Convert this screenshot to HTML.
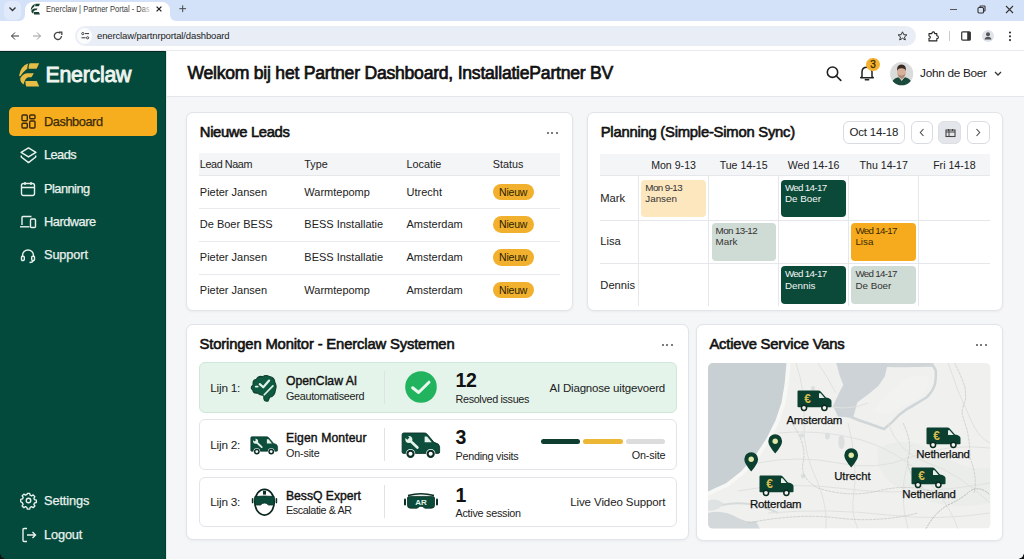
<!DOCTYPE html>
<html><head><meta charset="utf-8"><title>Enerclaw</title><style>*{box-sizing:border-box;margin:0;padding:0}
html,body{width:1024px;height:559px;overflow:hidden;background:#fff;font-family:"Liberation Sans",sans-serif;color:#111;position:relative}
.abs{position:absolute}
.t{position:absolute;white-space:nowrap;line-height:1}
svg.abs{overflow:visible}</style></head><body>
<div class="abs" style="left:0.00px;top:0.00px;width:1024.00px;height:51.00px;background:#fff"></div>
<div class="abs" style="left:0.00px;top:0.00px;width:1024.00px;height:10.00px;background:#d4e2f9"></div>
<div class="abs" style="left:0.00px;top:0.00px;width:24.50px;height:20.80px;background:#d4e2f9;border-bottom-right-radius:6px"></div>
<div class="abs" style="left:170.00px;top:0.00px;width:854.00px;height:20.80px;background:#d4e2f9;border-bottom-left-radius:6px"></div>
<div class="abs" style="left:3.50px;top:1.00px;width:17.50px;height:18.50px;background:#e1eafa;border-radius:6px"></div>
<svg class="abs" style="left:8.00px;top:6.00px;" width="9" height="6" viewBox="0 0 9 6"><path d="M1.5 1.5 L4.5 4.5 L7.5 1.5" stroke="#333" stroke-width="1.3" fill="none"/></svg>
<div class="abs" style="left:24.50px;top:1.50px;width:145.50px;height:20.50px;background:#fff;border-radius:8px 8px 0 0"></div>
<svg class="abs" style="left:29.50px;top:3.20px;" width="12" height="13.6" viewBox="0 0 30 34"><g transform="translate(-4 -4) scale(1.15)" fill="#163f31">
<path d="M15.6 5.2 H25.2 L22.6 10.8 H14.6 Q14.4 7.8 15.6 5.2 Z"/>
<path d="M14.2 5.4 Q6.8 7.6 5.1 17.6 Q5.4 18.8 6.4 18.1 Q9.6 13.2 13.2 10.7 Q13.3 7.9 14.2 5.4 Z"/>
<path d="M6.2 20.6 Q8.8 15.6 13 15.3 H19.9 L17.4 19.2 H14.2 Q11.2 19.8 9.6 26.4 Q6.2 24.6 6.2 20.6 Z"/>
<path d="M11.4 23.1 H22.8 L25.2 28.6 H12.3 Q11.2 26.2 11.4 23.1 Z"/>
</g></svg>
<div class="t" style="left:45.50px;top:5.02px;font-size:8.6px;font-weight:normal;color:#3a3a3a;transform:scaleX(0.8766);transform-origin:left center;">Enerclaw | Partner Portal - Das</div>
<div class="abs" style="left:140.00px;top:3.00px;width:13.00px;height:17.00px;background:linear-gradient(90deg,rgba(255,255,255,0),#fff)"></div>
<svg class="abs" style="left:156.40px;top:5.80px;" width="6" height="6" viewBox="0 0 6 6"><path d="M0.6 0.6L5.4 5.4M5.4 0.6L0.6 5.4" stroke="#222" stroke-width="1.3"/></svg>
<svg class="abs" style="left:178.80px;top:5.20px;" width="7.4" height="7.4" viewBox="0 0 7.4 7.4"><path d="M3.7 0.3V7.1M0.3 3.7H7.1" stroke="#444" stroke-width="1"/></svg>
<div class="abs" style="left:950.00px;top:8.50px;width:7.00px;height:1.10px;background:#555"></div>
<svg class="abs" style="left:977.00px;top:5.00px;" width="9" height="9" viewBox="0 0 9 9"><rect x="1" y="2.5" width="5.5" height="5.5" rx="1" stroke="#333" stroke-width="1.1" fill="none"/><path d="M3 2.5V1.5Q3 1 3.5 1H7.5Q8 1 8 1.5V5.5Q8 6 7.5 6H6.5" stroke="#333" stroke-width="1.1" fill="none"/></svg>
<svg class="abs" style="left:1005.00px;top:5.00px;" width="9" height="9" viewBox="0 0 9 9"><path d="M1 1L8 8M8 1L1 8" stroke="#333" stroke-width="1.1"/></svg>
<div class="abs" style="left:0.00px;top:50.00px;width:1024.00px;height:1.00px;background:#e8eaed"></div>
<svg class="abs" style="left:9.50px;top:31.00px;" width="10" height="10" viewBox="0 0 10 10"><path d="M9 5H1.5M5 1.5L1.5 5L5 8.5" stroke="#333" stroke-width="1" fill="none"/></svg>
<svg class="abs" style="left:31.50px;top:31.00px;" width="10" height="10" viewBox="0 0 10 10"><path d="M1 5H8.5M5 1.5L8.5 5L5 8.5" stroke="#999" stroke-width="1" fill="none"/></svg>
<svg class="abs" style="left:53.00px;top:31.00px;" width="10" height="10" viewBox="0 0 10 10"><path d="M8.5 5A3.6 3.6 0 1 1 7.4 2.3" stroke="#444" stroke-width="1.3" fill="none"/><path d="M6 1.2H8.8V4" stroke="#444" stroke-width="1.3" fill="none"/></svg>
<div class="abs" style="left:74.50px;top:25.50px;width:841.50px;height:20.30px;background:#e9eef6;border-radius:11px"></div>
<div class="abs" style="left:77.00px;top:27.50px;width:15.00px;height:16.30px;background:#fbfcfe;border-radius:8px"></div>
<svg class="abs" style="left:80.50px;top:32.00px;" width="8.5" height="7.5" viewBox="0 0 8.5 7.5"><circle cx="1.8" cy="1.6" r="1.1" stroke="#333" stroke-width="0.9" fill="none"/><path d="M4 1.6H8" stroke="#333" stroke-width="1"/><circle cx="6.6" cy="5.8" r="1.1" stroke="#333" stroke-width="0.9" fill="none"/><path d="M0.5 5.8H4.6" stroke="#333" stroke-width="1"/></svg>
<div class="t" style="left:97.00px;top:30.96px;font-size:9.5px;font-weight:normal;color:#222;letter-spacing:-0.138px;">enerclaw/partnrportal/dashboard</div>
<svg class="abs" style="left:897.00px;top:31.00px;" width="11" height="10" viewBox="0 0 11 10"><path d="M5.5 0.8L6.8 3.7L9.9 3.9L7.5 5.9L8.3 9L5.5 7.3L2.7 9L3.5 5.9L1.1 3.9L4.2 3.7Z" stroke="#333" stroke-width="1" fill="none" stroke-linejoin="round"/></svg>
<svg class="abs" style="left:927.50px;top:30.50px;" width="11" height="11" viewBox="0 0 11 11"><path d="M1 2.6 H3.9 Q3.9 0.9 5.3 0.9 Q6.7 0.9 6.7 2.6 H8.8 V4.8 Q10.4 4.8 10.4 6.2 Q10.4 7.6 8.8 7.6 V9.9 H1 V7.4 Q2.4 7.4 2.4 6.2 Q2.4 5 1 5 Z" stroke="#222" stroke-width="1.1" fill="none" stroke-linejoin="round"/></svg>
<div class="abs" style="left:949.00px;top:31.00px;width:1.00px;height:10.00px;background:#ccc"></div>
<svg class="abs" style="left:961.00px;top:31.00px;" width="10" height="10" viewBox="0 0 10 10"><rect x="0.7" y="0.8" width="8.6" height="8.4" rx="1" stroke="#333" stroke-width="1.2" fill="none"/><rect x="6.2" y="1" width="3" height="8" fill="#333"/></svg>
<div class="abs" style="left:982.00px;top:30.00px;width:12.00px;height:12.00px;background:#dfe3ea;border-radius:50%"></div>
<svg class="abs" style="left:982.00px;top:30.00px;" width="12" height="12" viewBox="0 0 12 12"><circle cx="6" cy="4.3" r="2" fill="#555"/><path d="M2.5 9.5Q3 6.8 6 6.8Q9 6.8 9.5 9.5Z" fill="#555"/></svg>
<svg class="abs" style="left:1008.00px;top:31.00px;" width="4" height="11" viewBox="0 0 4 11"><circle cx="2" cy="1.5" r="1.1" fill="#333"/><circle cx="2" cy="5.3" r="1.1" fill="#333"/><circle cx="2" cy="9.1" r="1.1" fill="#333"/></svg>
<div class="abs" style="left:0.00px;top:51.00px;width:166.00px;height:508.00px;background:#034a3d"></div>
<div class="abs" style="left:0.00px;top:50.50px;width:166.00px;height:1.30px;background:#04261e"></div>
<div class="abs" style="left:164.80px;top:51.00px;width:1.20px;height:508.00px;background:#023d32"></div>
<div class="abs" style="left:166.00px;top:51.00px;width:1.00px;height:508.00px;background:#e3e6ea"></div>
<svg class="abs" style="left:14.00px;top:58.00px;" width="30" height="34" viewBox="0 0 30 34"><g fill="#e8bd45">
<path d="M15.6 5.2 H25.2 L22.6 10.8 H14.6 Q14.4 7.8 15.6 5.2 Z"/>
<path d="M14.2 5.4 Q6.8 7.6 5.1 17.6 Q5.4 18.8 6.4 18.1 Q9.6 13.2 13.2 10.7 Q13.3 7.9 14.2 5.4 Z"/>
<path d="M6.2 20.6 Q8.8 15.6 13 15.3 H19.9 L17.4 19.2 H14.2 Q11.2 19.8 9.6 26.4 Q6.2 24.6 6.2 20.6 Z"/>
<path d="M11.4 23.1 H22.8 L25.2 28.6 H12.3 Q11.2 26.2 11.4 23.1 Z"/>
</g></svg>
<div class="t" style="left:45.50px;top:64.87px;font-size:21.3px;font-weight:normal;color:#eef5ef;-webkit-text-stroke:0.9px #eef5ef;letter-spacing:-0.237px;">Enerclaw</div>
<div class="abs" style="left:9.00px;top:106.60px;width:148.00px;height:29.60px;background:#f6ae1f;border-radius:5px"></div>
<svg class="abs" style="left:20.50px;top:113.50px;" width="15" height="15" viewBox="0 0 15 15"><g fill="none" stroke="#3b2a0c" stroke-width="1.4"><rect x="1" y="1" width="5.3" height="5.8" rx="1"/><rect x="8.7" y="1" width="5.3" height="3.8" rx="1"/><rect x="1" y="9.2" width="5.3" height="4.8" rx="1"/><rect x="8.7" y="7" width="5.3" height="7" rx="1"/></g></svg>
<div class="t" style="left:44.00px;top:115.56px;font-size:12.8px;font-weight:normal;color:#3b2a0c;-webkit-text-stroke:0.25px;letter-spacing:-0.445px;">Dashboard</div>
<svg class="abs" style="left:19.80px;top:146.50px;" width="17" height="17" viewBox="0 0 17 17"><g fill="none" stroke="#e9f1ec" stroke-width="1.5" stroke-linejoin="round"><path d="M8.5 0.9L15.9 5.4L8.5 9.9L1.1 5.4Z"/><path d="M1.3 8.6V10L8.5 15.6L15.7 10V8.6"/></g></svg>
<div class="t" style="left:44.00px;top:149.36px;font-size:12.8px;font-weight:normal;color:#e9f1ec;-webkit-text-stroke:0.25px;letter-spacing:-0.575px;">Leads</div>
<svg class="abs" style="left:20.00px;top:180.50px;" width="16" height="16" viewBox="0 0 16 16"><g fill="none" stroke="#e9f1ec" stroke-width="1.4"><rect x="1.5" y="2.5" width="13" height="12" rx="2"/><path d="M1.5 6.5H14.5M5 1V4M11 1V4"/></g></svg>
<div class="t" style="left:44.00px;top:182.66px;font-size:12.8px;font-weight:normal;color:#e9f1ec;-webkit-text-stroke:0.25px;letter-spacing:-0.527px;">Planning</div>
<svg class="abs" style="left:19.00px;top:214.00px;" width="18" height="16" viewBox="0 0 18 16"><g fill="none" stroke="#e9f1ec" stroke-width="1.4"><path d="M3 11V3.5Q3 2.5 4 2.5H12.5"/><path d="M1 12.8H10.5"/><rect x="11.5" y="5" width="5" height="8.5" rx="1"/></g></svg>
<div class="t" style="left:44.00px;top:216.16px;font-size:12.8px;font-weight:normal;color:#e9f1ec;-webkit-text-stroke:0.25px;letter-spacing:-0.473px;">Hardware</div>
<svg class="abs" style="left:20.00px;top:248.00px;" width="16" height="16" viewBox="0 0 16 16"><g fill="none" stroke="#e9f1ec" stroke-width="1.4"><path d="M2.5 9V7.5A5.5 5.5 0 0 1 13.5 7.5V9"/><rect x="1.5" y="8.2" width="2.8" height="4.3" rx="1"/><rect x="11.7" y="8.2" width="2.8" height="4.3" rx="1"/><path d="M13 12.5Q13 14.5 9.5 14.5"/></g></svg>
<div class="t" style="left:44.00px;top:249.36px;font-size:12.8px;font-weight:normal;color:#e9f1ec;-webkit-text-stroke:0.25px;letter-spacing:-0.147px;">Support</div>
<svg class="abs" style="left:19.50px;top:492.00px;" width="17" height="17" viewBox="0 0 24 24"><g fill="none" stroke="#e9f1ec" stroke-width="1.9" stroke-linejoin="round"><path d="M10.3 2h3.4l.6 2.6 2 .9 2.3-1.4 2.4 2.4-1.4 2.3.9 2 2.6.6v3.4l-2.6.6-.9 2 1.4 2.3-2.4 2.4-2.3-1.4-2 .9-.6 2.6h-3.4l-.6-2.6-2-.9-2.3 1.4-2.4-2.4 1.4-2.3-.9-2L1 13.7v-3.4l2.6-.6.9-2-1.4-2.3 2.4-2.4 2.3 1.4 2-.9z"/><circle cx="12" cy="12" r="3.2"/></g></svg>
<div class="t" style="left:44.00px;top:495.36px;font-size:12.8px;font-weight:normal;color:#e9f1ec;-webkit-text-stroke:0.25px;letter-spacing:-0.131px;">Settings</div>
<svg class="abs" style="left:20.50px;top:526.50px;" width="16" height="16" viewBox="0 0 16 16"><g fill="none" stroke="#e9f1ec" stroke-width="1.4"><path d="M6 1.5H3Q2 1.5 2 2.5V13.5Q2 14.5 3 14.5H6"/><path d="M6 8H14.5M11.5 5L14.5 8L11.5 11"/></g></svg>
<div class="t" style="left:44.00px;top:528.86px;font-size:12.8px;font-weight:normal;color:#e9f1ec;-webkit-text-stroke:0.25px;letter-spacing:-0.157px;">Logout</div>
<div class="abs" style="left:167.00px;top:51.00px;width:857.00px;height:508.00px;background:#f4f6f7"></div>
<div class="abs" style="left:167.00px;top:51.00px;width:857.00px;height:46.00px;background:#fff;border-bottom:1px solid #e3e6ea"></div>
<div class="t" style="left:187.40px;top:65.10px;font-size:17.6px;font-weight:normal;color:#111;-webkit-text-stroke:0.7px #111;letter-spacing:-0.239px;">Welkom bij het Partner Dashboard, InstallatiePartner BV</div>
<svg class="abs" style="left:826.00px;top:66.00px;" width="16" height="15" viewBox="0 0 16 15"><circle cx="6.5" cy="6.2" r="5.2" stroke="#222" stroke-width="1.6" fill="none"/><path d="M10.3 10L14.8 14.3" stroke="#222" stroke-width="1.7" stroke-linecap="round"/></svg>
<svg class="abs" style="left:859.00px;top:65.00px;" width="16" height="16" viewBox="0 0 16 16"><path d="M3 11.5V7Q3 2.3 8 2.3Q13 2.3 13 7V11.5L14.3 12.7H1.7Z" stroke="#222" stroke-width="1.5" fill="none" stroke-linejoin="round"/><path d="M6.3 14.7H9.7" stroke="#222" stroke-width="1.5" stroke-linecap="round"/></svg>
<div class="abs" style="left:866.40px;top:57.90px;width:13.40px;height:13.40px;background:#f2b12e;border-radius:50%"></div>
<div class="t" style="left:723.10px;width:300px;top:59.93px;font-size:10px;font-weight:normal;color:#3a2800;text-align:center;-webkit-text-stroke:0.3px #3a2800;">3</div>
<svg class="abs" style="left:890.2px;top:61.6px" width="23.4" height="23.4" viewBox="0 0 24 24">
<defs><clipPath id="av"><circle cx="12" cy="12" r="11.9"/></clipPath></defs>
<g clip-path="url(#av)"><rect width="24" height="24" fill="#dadbdb"/>
<path d="M0.5 26 Q1.5 17 8.5 15.6 L12 18.5 L15.5 15.6 Q22.5 17 23.5 26Z" fill="#1b4a3c"/>
<path d="M9.5 15.8 L12 19.5 L14.5 15.8Z" fill="#e6e6e6"/>
<path d="M9.8 13.5 H14.2 V16.2 L12 18.3 L9.8 16.2Z" fill="#c59b84"/>
<ellipse cx="11.8" cy="10.6" rx="4.4" ry="5.6" fill="#d6b09a"/>
<path d="M7.6 11.5 Q8 15.8 11.8 16.2 Q15.6 15.8 16 11.5 Q15 13.8 11.8 14 Q8.6 13.8 7.6 11.5Z" fill="#8a6a58" opacity="0.6"/>
<path d="M7.2 9.5 Q6.6 2.6 11.8 2.5 Q17 2.6 16.4 9.5 Q15.6 6.2 11.8 6.3 Q8 6.2 7.2 9.5Z" fill="#3a2a22"/>
</g></svg>
<div class="t" style="left:920.10px;top:67.61px;font-size:11.8px;font-weight:normal;color:#1a1a1a;letter-spacing:-0.307px;">John de Boer</div>
<svg class="abs" style="left:993.50px;top:71.00px;" width="8" height="5" viewBox="0 0 8 5"><path d="M1 1L4 4L7 1" stroke="#333" stroke-width="1.3" fill="none"/></svg>
<div class="abs" style="left:186.00px;top:111.50px;width:387.00px;height:199.50px;background:#fff;border:1px solid #e1e4e8;border-radius:7px;box-shadow:0 1px 3px rgba(0,0,0,0.05)"></div>
<div class="t" style="left:199.80px;top:124.57px;font-size:14.8px;font-weight:normal;color:#111;-webkit-text-stroke:0.6px #111;letter-spacing:-0.340px;">Nieuwe Leads</div>
<div class="abs" style="left:547.00px;top:131.60px;width:2.10px;height:2.10px;background:#505050;border-radius:50%"></div>
<div class="abs" style="left:551.40px;top:131.60px;width:2.10px;height:2.10px;background:#505050;border-radius:50%"></div>
<div class="abs" style="left:555.80px;top:131.60px;width:2.10px;height:2.10px;background:#505050;border-radius:50%"></div>
<div class="abs" style="left:199.00px;top:153.00px;width:361.00px;height:22.50px;background:#f4f5f7;border-bottom:1px solid #e5e7ea"></div>
<div class="t" style="left:199.80px;top:158.86px;font-size:10.8px;font-weight:normal;color:#222;letter-spacing:-0.392px;">Lead Naam</div>
<div class="t" style="left:304.30px;top:158.86px;font-size:10.8px;font-weight:normal;color:#222;">Type</div>
<div class="t" style="left:406.50px;top:158.86px;font-size:10.8px;font-weight:normal;color:#222;">Locatie</div>
<div class="t" style="left:492.80px;top:158.86px;font-size:10.8px;font-weight:normal;color:#222;">Status</div>
<div class="t" style="left:199.80px;top:186.59px;font-size:11px;font-weight:normal;color:#222;">Pieter Jansen</div>
<div class="t" style="left:304.30px;top:186.59px;font-size:11px;font-weight:normal;color:#222;">Warmtepomp</div>
<div class="t" style="left:406.50px;top:186.59px;font-size:11px;font-weight:normal;color:#222;">Utrecht</div>
<div class="abs" style="left:492.60px;top:183.60px;width:41.00px;height:16.90px;background:#f1b02d;border-radius:9px"></div>
<div class="t" style="left:363.10px;width:300px;top:186.61px;font-size:10.5px;font-weight:normal;color:#2b2100;text-align:center;letter-spacing:-0.217px;">Nieuw</div>
<div class="abs" style="left:199.00px;top:208.20px;width:361.00px;height:1.00px;background:#e7e9ec"></div>
<div class="t" style="left:199.80px;top:219.24px;font-size:11px;font-weight:normal;color:#222;">De Boer BESS</div>
<div class="t" style="left:304.30px;top:219.24px;font-size:11px;font-weight:normal;color:#222;">BESS Installatie</div>
<div class="t" style="left:406.50px;top:219.24px;font-size:11px;font-weight:normal;color:#222;">Amsterdam</div>
<div class="abs" style="left:492.60px;top:216.25px;width:41.00px;height:16.90px;background:#f1b02d;border-radius:9px"></div>
<div class="t" style="left:363.10px;width:300px;top:219.26px;font-size:10.5px;font-weight:normal;color:#2b2100;text-align:center;letter-spacing:-0.217px;">Nieuw</div>
<div class="abs" style="left:199.00px;top:240.85px;width:361.00px;height:1.00px;background:#e7e9ec"></div>
<div class="t" style="left:199.80px;top:251.89px;font-size:11px;font-weight:normal;color:#222;">Pieter Jansen</div>
<div class="t" style="left:304.30px;top:251.89px;font-size:11px;font-weight:normal;color:#222;">BESS Installatie</div>
<div class="t" style="left:406.50px;top:251.89px;font-size:11px;font-weight:normal;color:#222;">Amsterdam</div>
<div class="abs" style="left:492.60px;top:248.90px;width:41.00px;height:16.90px;background:#f1b02d;border-radius:9px"></div>
<div class="t" style="left:363.10px;width:300px;top:251.91px;font-size:10.5px;font-weight:normal;color:#2b2100;text-align:center;letter-spacing:-0.217px;">Nieuw</div>
<div class="abs" style="left:199.00px;top:273.50px;width:361.00px;height:1.00px;background:#e7e9ec"></div>
<div class="t" style="left:199.80px;top:284.54px;font-size:11px;font-weight:normal;color:#222;">Pieter Jansen</div>
<div class="t" style="left:304.30px;top:284.54px;font-size:11px;font-weight:normal;color:#222;">Warmtepomp</div>
<div class="t" style="left:406.50px;top:284.54px;font-size:11px;font-weight:normal;color:#222;">Amsterdam</div>
<div class="abs" style="left:492.60px;top:281.55px;width:41.00px;height:16.90px;background:#f1b02d;border-radius:9px"></div>
<div class="t" style="left:363.10px;width:300px;top:284.56px;font-size:10.5px;font-weight:normal;color:#2b2100;text-align:center;letter-spacing:-0.217px;">Nieuw</div>
<div class="abs" style="left:587.00px;top:111.50px;width:415.80px;height:199.00px;background:#fff;border:1px solid #e1e4e8;border-radius:7px;box-shadow:0 1px 3px rgba(0,0,0,0.05)"></div>
<div class="t" style="left:600.70px;top:125.07px;font-size:14.8px;font-weight:normal;color:#111;-webkit-text-stroke:0.6px #111;letter-spacing:-0.228px;">Planning (Simple-Simon Sync)</div>
<div class="abs" style="left:843.00px;top:121.20px;width:61.60px;height:22.70px;background:#fff;border:1px solid #d8dbe0;border-radius:6px"></div>
<div class="t" style="left:723.80px;width:300px;top:126.76px;font-size:11.5px;font-weight:normal;color:#222;text-align:center;letter-spacing:-0.189px;">Oct 14-18</div>
<div class="abs" style="left:910.70px;top:121.20px;width:22.00px;height:22.70px;background:#fff;border:1px solid #d8dbe0;border-radius:6px"></div>
<svg class="abs" style="left:917.80px;top:128.00px;" width="8" height="9" viewBox="0 0 8 9"><path d="M5.5 1L2.3 4.5L5.5 8" stroke="#444" stroke-width="1.05" fill="none"/></svg>
<div class="abs" style="left:938.20px;top:121.20px;width:23.10px;height:22.70px;background:#e3e6ea;border:1px solid #dcdfe3;border-radius:6px"></div>
<svg class="abs" style="left:944.50px;top:127.50px;" width="11" height="10" viewBox="0 0 11 10"><rect x="1" y="2" width="9" height="6.5" stroke="#444" stroke-width="1.1" fill="none"/><path d="M1 4H10M4 2V8.5M3.5 1V3M7.5 1V3" stroke="#444" stroke-width="1"/></svg>
<div class="abs" style="left:966.80px;top:121.20px;width:23.00px;height:22.70px;background:#fff;border:1px solid #d8dbe0;border-radius:6px"></div>
<svg class="abs" style="left:974.00px;top:128.00px;" width="8" height="9" viewBox="0 0 8 9"><path d="M2.5 1L5.7 4.5L2.5 8" stroke="#444" stroke-width="1.05" fill="none"/></svg>
<div class="abs" style="left:600.00px;top:153.50px;width:390.00px;height:22.90px;background:#f4f5f7;border-bottom:1px solid #e5e7ea"></div>
<div class="t" style="left:523.55px;width:300px;top:159.82px;font-size:10.6px;font-weight:normal;color:#222;text-align:center;">Mon 9-13</div>
<div class="t" style="left:593.60px;width:300px;top:159.82px;font-size:10.6px;font-weight:normal;color:#222;text-align:center;">Tue 14-15</div>
<div class="t" style="left:663.65px;width:300px;top:159.82px;font-size:10.6px;font-weight:normal;color:#222;text-align:center;">Wed 14-16</div>
<div class="t" style="left:733.75px;width:300px;top:159.82px;font-size:10.6px;font-weight:normal;color:#222;text-align:center;">Thu 14-17</div>
<div class="t" style="left:804.35px;width:300px;top:159.82px;font-size:10.6px;font-weight:normal;color:#222;text-align:center;">Fri 14-18</div>
<div class="abs" style="left:638.10px;top:176.40px;width:1.00px;height:130.10px;background:#e5e7ea"></div>
<div class="abs" style="left:708.00px;top:176.40px;width:1.00px;height:130.10px;background:#e5e7ea"></div>
<div class="abs" style="left:778.20px;top:176.40px;width:1.00px;height:130.10px;background:#e5e7ea"></div>
<div class="abs" style="left:848.10px;top:176.40px;width:1.00px;height:130.10px;background:#e5e7ea"></div>
<div class="abs" style="left:918.40px;top:176.40px;width:1.00px;height:130.10px;background:#e5e7ea"></div>
<div class="abs" style="left:600.00px;top:219.60px;width:390.00px;height:1.00px;background:#e5e7ea"></div>
<div class="abs" style="left:600.00px;top:263.00px;width:390.00px;height:1.00px;background:#e5e7ea"></div>
<div class="t" style="left:600.30px;top:192.72px;font-size:11.2px;font-weight:normal;color:#222;">Mark</div>
<div class="t" style="left:600.30px;top:236.22px;font-size:11.2px;font-weight:normal;color:#222;">Lisa</div>
<div class="t" style="left:600.30px;top:279.52px;font-size:11.2px;font-weight:normal;color:#222;">Dennis</div>
<div class="abs" style="left:641.30px;top:179.70px;width:64.60px;height:36.90px;background:#fce7bf;border-radius:4px"></div>
<div class="t" style="left:645.30px;top:182.80px;font-size:9.8px;font-weight:normal;color:#333;letter-spacing:-0.574px;">Mon 9-13</div>
<div class="t" style="left:645.30px;top:194.00px;font-size:9.8px;font-weight:normal;color:#333;">Jansen</div>
<div class="abs" style="left:781.00px;top:179.70px;width:65.00px;height:37.10px;background:#0b4a39;border-radius:4px"></div>
<div class="t" style="left:785.00px;top:182.80px;font-size:9.8px;font-weight:normal;color:#f2f5f3;letter-spacing:-0.706px;">Wed 14-17</div>
<div class="t" style="left:785.00px;top:194.00px;font-size:9.8px;font-weight:normal;color:#f2f5f3;">De Boer</div>
<div class="abs" style="left:711.60px;top:223.00px;width:64.10px;height:37.70px;background:#cfdbd5;border-radius:4px"></div>
<div class="t" style="left:715.60px;top:226.10px;font-size:9.8px;font-weight:normal;color:#333;letter-spacing:-0.605px;">Mon 13-12</div>
<div class="t" style="left:715.60px;top:237.30px;font-size:9.8px;font-weight:normal;color:#333;">Mark</div>
<div class="abs" style="left:851.40px;top:223.00px;width:64.90px;height:37.70px;background:#f6ab1f;border-radius:4px"></div>
<div class="t" style="left:855.40px;top:226.10px;font-size:9.8px;font-weight:normal;color:#3a2a00;letter-spacing:-0.706px;">Wed 14-17</div>
<div class="t" style="left:855.40px;top:237.30px;font-size:9.8px;font-weight:normal;color:#3a2a00;">Lisa</div>
<div class="abs" style="left:781.00px;top:266.30px;width:65.00px;height:37.70px;background:#0b4a39;border-radius:4px"></div>
<div class="t" style="left:785.00px;top:269.40px;font-size:9.8px;font-weight:normal;color:#f2f5f3;letter-spacing:-0.706px;">Wed 14-17</div>
<div class="t" style="left:785.00px;top:280.60px;font-size:9.8px;font-weight:normal;color:#f2f5f3;">Dennis</div>
<div class="abs" style="left:851.40px;top:266.30px;width:64.90px;height:37.70px;background:#cfdbd5;border-radius:4px"></div>
<div class="t" style="left:855.40px;top:269.40px;font-size:9.8px;font-weight:normal;color:#333;letter-spacing:-0.706px;">Wed 14-17</div>
<div class="t" style="left:855.40px;top:280.60px;font-size:9.8px;font-weight:normal;color:#333;">De Boer</div>
<div class="abs" style="left:186.00px;top:324.30px;width:503.00px;height:216.00px;background:#fff;border:1px solid #e1e4e8;border-radius:7px;box-shadow:0 1px 3px rgba(0,0,0,0.05)"></div>
<div class="t" style="left:199.50px;top:337.27px;font-size:14.8px;font-weight:normal;color:#111;-webkit-text-stroke:0.6px #111;letter-spacing:-0.154px;">Storingen Monitor - Enerclaw Systemen</div>
<div class="abs" style="left:662.00px;top:344.00px;width:2.10px;height:2.10px;background:#505050;border-radius:50%"></div>
<div class="abs" style="left:666.40px;top:344.00px;width:2.10px;height:2.10px;background:#505050;border-radius:50%"></div>
<div class="abs" style="left:670.80px;top:344.00px;width:2.10px;height:2.10px;background:#505050;border-radius:50%"></div>
<div class="abs" style="left:199.00px;top:362.40px;width:478.00px;height:50.80px;background:#e4f4ea;border:1px solid #cfe7d8;border-radius:6px"></div>
<div class="abs" style="left:199.00px;top:419.40px;width:478.00px;height:50.60px;background:#fff;border:1px solid #e1e4e8;border-radius:6px"></div>
<div class="abs" style="left:199.00px;top:476.50px;width:478.00px;height:50.70px;background:#fff;border:1px solid #e1e4e8;border-radius:6px"></div>
<div class="t" style="left:210.30px;top:382.61px;font-size:11.8px;font-weight:normal;color:#222;letter-spacing:-0.241px;">Lijn 1:</div>
<div class="t" style="left:286.00px;top:375.47px;font-size:12.2px;font-weight:normal;color:#111;-webkit-text-stroke:0.4px #111;letter-spacing:0.005px;">OpenClaw AI</div>
<div class="t" style="left:286.00px;top:391.06px;font-size:10.8px;font-weight:normal;color:#222;letter-spacing:-0.315px;">Geautomatiseerd</div>
<div class="abs" style="left:384.00px;top:371.00px;width:1.00px;height:33.40px;background:#dfe3e6"></div>
<div class="t" style="left:455.50px;top:371.49px;font-size:19.5px;font-weight:bold;color:#111;letter-spacing:-0.302px;">12</div>
<div class="t" style="left:455.50px;top:394.16px;font-size:10.8px;font-weight:normal;color:#222;letter-spacing:-0.335px;">Resolved issues</div>
<div class="t" style="left:210.30px;top:439.61px;font-size:11.8px;font-weight:normal;color:#222;letter-spacing:-0.241px;">Lijn 2:</div>
<div class="t" style="left:286.00px;top:432.47px;font-size:12.2px;font-weight:normal;color:#111;-webkit-text-stroke:0.4px #111;letter-spacing:0.101px;">Eigen Monteur</div>
<div class="t" style="left:286.00px;top:448.06px;font-size:10.8px;font-weight:normal;color:#222;letter-spacing:-0.188px;">On-site</div>
<div class="abs" style="left:384.00px;top:428.00px;width:1.00px;height:33.40px;background:#dfe3e6"></div>
<div class="t" style="left:455.50px;top:428.49px;font-size:19.5px;font-weight:bold;color:#111;">3</div>
<div class="t" style="left:455.50px;top:451.16px;font-size:10.8px;font-weight:normal;color:#222;letter-spacing:-0.259px;">Pending visits</div>
<div class="t" style="left:210.30px;top:496.71px;font-size:11.8px;font-weight:normal;color:#222;letter-spacing:-0.241px;">Lijn 3:</div>
<div class="t" style="left:286.00px;top:489.57px;font-size:12.2px;font-weight:normal;color:#111;-webkit-text-stroke:0.4px #111;letter-spacing:-0.024px;">BessQ Expert</div>
<div class="t" style="left:286.00px;top:505.16px;font-size:10.8px;font-weight:normal;color:#222;letter-spacing:-0.409px;">Escalatie &amp; AR</div>
<div class="abs" style="left:384.00px;top:485.10px;width:1.00px;height:33.40px;background:#dfe3e6"></div>
<div class="t" style="left:455.50px;top:485.59px;font-size:19.5px;font-weight:bold;color:#111;">1</div>
<div class="t" style="left:455.50px;top:508.26px;font-size:10.8px;font-weight:normal;color:#222;letter-spacing:-0.265px;">Active session</div>
<svg class="abs" style="left:249.40px;top:374.00px;" width="27.5" height="27.5" viewBox="0 0 26 26"><path d="M4 10 Q3 6 7 5 Q9 1.5 13 2.5 Q16 0.5 19.5 2.5 Q24 3.2 24.5 8 Q26.5 11 25 15 Q24.5 21 19.5 22 L18 25.5 Q14.5 26.5 14 23 L14 20 Q10 20.5 8 18 Q4 18.5 3.5 15 Q0.5 13 4 10 Z" fill="#0f5b41" stroke="#0a3e2d" stroke-width="1"/>
<path d="M10.2 9.6 L13.5 12.5 L19 6.2" stroke="#e2f2e8" stroke-width="2.1" fill="none" stroke-linecap="round" stroke-linejoin="round"/>
<path d="M6.4 11.9 H8.2" stroke="#e2f2e8" stroke-width="1.7" stroke-linecap="round"/>
<path d="M14.4 19.6 L22.6 11.3" stroke="#e2f2e8" stroke-width="1.6" stroke-linecap="round"/></svg>
<svg class="abs" style="left:405.00px;top:371.30px;" width="32" height="32" viewBox="0 0 32 32"><circle cx="16" cy="16" r="15.8" fill="#22b35e"/><path d="M7.6 16.8 L13.6 21.5 L24 11.2" stroke="#e8f8ee" stroke-width="3" fill="none" stroke-linecap="round" stroke-linejoin="round"/></svg>
<div class="t" style="right:359.00px;top:382.56px;font-size:11.5px;font-weight:normal;color:#222;text-align:right;letter-spacing:-0.180px;">AI Diagnose uitgevoerd</div>
<svg class="abs" style="left:250.20px;top:436.40px;" width="28.0" height="19.0" viewBox="0 0 28 19"><path d="M0.8 1.8 Q0.8 0.7 2 0.7 H16.8 Q17.9 0.7 18.6 1.5 L23.6 7.4 Q27.6 8.3 27.6 10.6 V14.3 Q27.6 15.3 26.6 15.3 H1.8 Q0.8 15.3 0.8 14.3 Z" fill="#0d4d3b" stroke="#0a3026" stroke-width="0.6"/>
<path d="M16.9 3.3 H18.6 L22 7.4 H16.9 Z" fill="#e3f3e9"/>
<path d="M6.6 6.3 L11.7 11.1" stroke="#e3f3e9" stroke-width="1.9" stroke-linecap="round"/>
<circle cx="5.6" cy="5.3" r="2.5" fill="#e3f3e9"/>
<rect x="3.2" y="2.4" width="2.2" height="2.8" fill="#0d4d3b" transform="rotate(-45 4.3 3.8)"/>
<circle cx="6.8" cy="15.6" r="3.4" fill="#fff"/>
<circle cx="21.2" cy="15.6" r="3.4" fill="#fff"/>
<circle cx="6.8" cy="15.6" r="2.2" fill="#fff" stroke="#0a2e24" stroke-width="1.5"/>
<circle cx="21.2" cy="15.6" r="2.2" fill="#fff" stroke="#0a2e24" stroke-width="1.5"/></svg>
<svg class="abs" style="left:401.00px;top:432.00px;" width="39.2" height="26.6" viewBox="0 0 28 19"><path d="M0.8 1.8 Q0.8 0.7 2 0.7 H16.8 Q17.9 0.7 18.6 1.5 L23.6 7.4 Q27.6 8.3 27.6 10.6 V14.3 Q27.6 15.3 26.6 15.3 H1.8 Q0.8 15.3 0.8 14.3 Z" fill="#0d4d3b" stroke="#0a3026" stroke-width="0.6"/>
<path d="M16.9 3.3 H18.6 L22 7.4 H16.9 Z" fill="#e3f3e9"/>
<path d="M6.6 6.3 L11.7 11.1" stroke="#e3f3e9" stroke-width="1.9" stroke-linecap="round"/>
<circle cx="5.6" cy="5.3" r="2.5" fill="#e3f3e9"/>
<rect x="3.2" y="2.4" width="2.2" height="2.8" fill="#0d4d3b" transform="rotate(-45 4.3 3.8)"/>
<circle cx="6.8" cy="15.6" r="3.4" fill="#fff"/>
<circle cx="21.2" cy="15.6" r="3.4" fill="#fff"/>
<circle cx="6.8" cy="15.6" r="2.2" fill="#fff" stroke="#0a2e24" stroke-width="1.5"/>
<circle cx="21.2" cy="15.6" r="2.2" fill="#fff" stroke="#0a2e24" stroke-width="1.5"/></svg>
<div class="abs" style="left:540.90px;top:439.30px;width:39.00px;height:4.80px;background:#0f3d30;border-radius:3px"></div>
<div class="abs" style="left:583.40px;top:439.30px;width:39.50px;height:4.80px;background:#ecb735;border-radius:3px"></div>
<div class="abs" style="left:625.90px;top:439.30px;width:39.50px;height:4.80px;background:#dcdcdc;border-radius:3px"></div>
<div class="t" style="right:358.60px;top:450.36px;font-size:10.8px;font-weight:normal;color:#222;text-align:right;letter-spacing:-0.159px;">On-site</div>
<svg class="abs" style="left:250.50px;top:488.00px;" width="27" height="28" viewBox="0 0 27 28"><ellipse cx="13.5" cy="14.2" rx="9.7" ry="12.9" fill="#fff" stroke="#0a261e" stroke-width="1.7"/>
<rect x="12" y="2.8" width="3" height="3.8" fill="#0b2f25"/>
<path d="M3.8 8.6 Q13.5 7.4 23.2 8.6 V15.5 Q23.2 17 21.5 17 H17.5 Q15.8 15 13.5 15 Q11.2 15 9.5 17 H5.5 Q3.8 17 3.8 15.5 Z" fill="#0b4a39" stroke="#0b2f25" stroke-width="0.8"/>
<rect x="0.8" y="10" width="1.6" height="5.4" rx="0.8" fill="#0b2f25"/>
<rect x="24.6" y="10" width="1.6" height="5.4" rx="0.8" fill="#0b2f25"/></svg>
<svg class="abs" style="left:403.20px;top:492.40px;" width="36" height="19" viewBox="0 0 36 19"><path d="M5 3.6 Q18 -0.2 31 3.6" stroke="#0b2f25" stroke-width="1.6" fill="none"/>
<path d="M4.5 6 Q4.5 4.4 6.5 4.4 H29.5 Q31.5 4.4 31.5 6 V13.5 Q31.5 16.2 28.5 16.2 H22 Q19.5 14.2 18 14.2 Q16.5 14.2 14 16.2 H7.5 Q4.5 16.2 4.5 13.5 Z" fill="#0b4a39" stroke="#0b2f25" stroke-width="0.8"/>
<rect x="1" y="6.5" width="2" height="7" rx="1" fill="#0b2f25"/>
<rect x="33" y="6.5" width="2" height="7" rx="1" fill="#0b2f25"/>
<text x="18" y="13.3" text-anchor="middle" font-family="Liberation Sans" font-weight="bold" font-size="8" fill="#e2f2e8">AR</text></svg>
<div class="t" style="right:358.60px;top:496.66px;font-size:11.5px;font-weight:normal;color:#222;text-align:right;letter-spacing:-0.099px;">Live Video Support</div>
<div class="abs" style="left:695.50px;top:324.30px;width:307.30px;height:216.30px;background:#fff;border:1px solid #e1e4e8;border-radius:7px;box-shadow:0 1px 3px rgba(0,0,0,0.05)"></div>
<div class="t" style="left:709.40px;top:337.07px;font-size:14.8px;font-weight:normal;color:#111;-webkit-text-stroke:0.6px #111;letter-spacing:-0.176px;">Actieve Service Vans</div>
<div class="abs" style="left:976.00px;top:344.00px;width:2.10px;height:2.10px;background:#505050;border-radius:50%"></div>
<div class="abs" style="left:980.40px;top:344.00px;width:2.10px;height:2.10px;background:#505050;border-radius:50%"></div>
<div class="abs" style="left:984.80px;top:344.00px;width:2.10px;height:2.10px;background:#505050;border-radius:50%"></div>
<svg class="abs" style="left:708.00px;top:362.70px;" width="282.6" height="165.6" viewBox="0 0 282.6 165.6"><defs><clipPath id="mc"><rect width="282.6" height="165.6" rx="5"/></clipPath></defs>
<g clip-path="url(#mc)">
<rect width="282.6" height="165.6" fill="#f0f1ef"/>
<path d="M170 85 Q200 70 235 92 Q262 110 282 104 V140 Q240 150 200 130 Q165 115 170 85Z" fill="#ebedea"/>

<path d="M0 0 H80.5 L78.5 21.6 L75.5 39.9 L69.4 58.1 L60.3 76.3 L48.2 94.6 L34.5 109.8 L19.3 121.9 L5.6 128 L0 131 Z" fill="#c9d0d3"/>
<path d="M80.5 0 L78.5 21.6 L75.5 39.9 L69.4 58.1 L60.3 76.3 L48.2 94.6 L34.5 109.8 L19.3 121.9 L5.6 128 L0 131" stroke="#f7f7f5" stroke-width="4" fill="none"/>
<path d="M128.2 0 L131.5 12 L135.3 22 L131 30 L125 43 L130 53.5 L145 55 L149.4 39.2 L160.7 31.1 L170.3 23.1 L176.8 13.4 L180 0 Z" fill="#cdd3d6"/>
<path d="M179 0 H226 L224 3.8 Q200 4.5 179 4Z" fill="#d0d6d8"/>
<path d="M143 54 Q152 58 162 61 Q170 64 176 66 Q184 60 191 52 Q198 46 206 42 Q213 38 219 34 Q225 28 227 21 Q228.5 12 227.5 7 Q226 3 223 1" stroke="#d0d6d8" stroke-width="2.6" fill="none"/>
<path d="M198 16 Q210 10 220 14 Q222 25 212 34 Q196 42 180 50 Q172 52 166 48 Q170 38 198 16Z" fill="#f2f3f1"/>
<path d="M0 138 Q8 134 16 141 Q10 148 0 148Z" fill="#dfe2e3"/>
<path d="M0 150 Q15 146 30 155 Q40 160 48 158 L52 166 H0Z" fill="#d3d8da"/>
<path d="M14 142 Q40 136 70 150" stroke="#d6dadb" stroke-width="2" fill="none"/>
<g fill="#dcdfdf">
<ellipse cx="133.4" cy="79" rx="3.2" ry="7"/>
<ellipse cx="119.4" cy="73" rx="2.5" ry="3.5"/>
<ellipse cx="94" cy="72.5" rx="2.5" ry="2.2"/>
<ellipse cx="95" cy="113" rx="2.2" ry="2.5"/>
<ellipse cx="105" cy="26" rx="2" ry="3"/>
</g>
<g stroke="#dfe1df" stroke-width="1" fill="none">
<path d="M88 0 Q98 30 96 60 Q95 90 110 120 Q120 145 118 166"/>
<path d="M50 100 Q90 92 130 100 Q170 108 200 95 Q240 80 282 85"/>
<path d="M30 128 Q80 118 140 126 Q200 134 282 120"/>
<path d="M70 70 Q110 66 150 76 Q200 90 230 130 Q245 150 250 166"/>
<path d="M140 60 Q150 100 146 130 Q142 150 150 166"/>
<path d="M180 60 Q190 90 220 100 Q250 110 282 140"/>
<path d="M100 40 Q140 50 160 40"/>
<path d="M60 150 Q120 145 180 152 Q230 158 282 150"/>
<path d="M240 0 Q250 30 262 55 Q270 75 282 80"/>
<path d="M200 100 Q190 130 200 166"/>
<path d="M110 0 Q120 15 128 30"/>
</g>
<g stroke="#c2c5c3" stroke-width="0.7" fill="none" stroke-dasharray="3 0.8">
<path d="M80 55 Q100 80 95 100 Q92 115 110 125 Q140 135 170 128 Q200 120 230 130"/>
<path d="M40 160 Q90 150 130 155 Q170 160 210 150"/>
<path d="M195 60 Q205 80 200 95 Q198 110 215 125"/>
<path d="M246 -1 Q252 10 257 24 Q258 32 257.4 37.6 Q254 45 254.1 50.5 Q256 58 259 66.6 Q262 80 262 95 Q270 115 266 130"/>
</g>
<path d="M218 166 Q226 150 240 142 Q255 135 262 128 Q272 122 282 132" stroke="#a8acaa" stroke-width="0.8" fill="none" stroke-dasharray="2 1"/>
</g></svg>
<svg class="abs" style="left:796.90px;top:390.20px;" width="35" height="21.5" viewBox="0 0 35 21.5"><path d="M0.5 1.5 Q0.5 0.5 1.5 0.5 H21.5 Q22.8 0.5 23.7 1.5 L29 7.4 Q34.5 8.4 34.5 11.2 V16.5 Q34.5 17.3 33.5 17.3 H1.5 Q0.5 17.3 0.5 16.5 Z" fill="#0b3f30"/>
<path d="M22 3.2 H23.6 L27.6 8 H22 Z" fill="#e9eee9"/>
<text x="10.5" y="12.8" font-family="Liberation Sans" font-weight="bold" font-size="12" fill="#d8bd4f" text-anchor="middle">€</text>
<circle cx="7" cy="17.8" r="2.6" fill="#f2f2f0" stroke="#0a2a20" stroke-width="1.5"/>
<circle cx="27.4" cy="17.8" r="2.6" fill="#f2f2f0" stroke="#0a2a20" stroke-width="1.5"/></svg>
<div class="t" style="left:664.20px;width:300px;top:414.85px;font-size:11.4px;font-weight:normal;color:#111;text-align:center;-webkit-text-stroke:0.25px #111;letter-spacing:-0.293px;">Amsterdam</div>
<svg class="abs" style="left:926.00px;top:426.50px;" width="35" height="21.5" viewBox="0 0 35 21.5"><path d="M0.5 1.5 Q0.5 0.5 1.5 0.5 H21.5 Q22.8 0.5 23.7 1.5 L29 7.4 Q34.5 8.4 34.5 11.2 V16.5 Q34.5 17.3 33.5 17.3 H1.5 Q0.5 17.3 0.5 16.5 Z" fill="#0b3f30"/>
<path d="M22 3.2 H23.6 L27.6 8 H22 Z" fill="#e9eee9"/>
<text x="10.5" y="12.8" font-family="Liberation Sans" font-weight="bold" font-size="12" fill="#d8bd4f" text-anchor="middle">€</text>
<circle cx="7" cy="17.8" r="2.6" fill="#f2f2f0" stroke="#0a2a20" stroke-width="1.5"/>
<circle cx="27.4" cy="17.8" r="2.6" fill="#f2f2f0" stroke="#0a2a20" stroke-width="1.5"/></svg>
<div class="t" style="left:793.00px;width:300px;top:449.15px;font-size:11.4px;font-weight:normal;color:#111;text-align:center;-webkit-text-stroke:0.25px #111;letter-spacing:-0.233px;">Netherland</div>
<svg class="abs" style="left:910.80px;top:466.80px;" width="35" height="21.5" viewBox="0 0 35 21.5"><path d="M0.5 1.5 Q0.5 0.5 1.5 0.5 H21.5 Q22.8 0.5 23.7 1.5 L29 7.4 Q34.5 8.4 34.5 11.2 V16.5 Q34.5 17.3 33.5 17.3 H1.5 Q0.5 17.3 0.5 16.5 Z" fill="#0b3f30"/>
<path d="M22 3.2 H23.6 L27.6 8 H22 Z" fill="#e9eee9"/>
<text x="10.5" y="12.8" font-family="Liberation Sans" font-weight="bold" font-size="12" fill="#d8bd4f" text-anchor="middle">€</text>
<circle cx="7" cy="17.8" r="2.6" fill="#f2f2f0" stroke="#0a2a20" stroke-width="1.5"/>
<circle cx="27.4" cy="17.8" r="2.6" fill="#f2f2f0" stroke="#0a2a20" stroke-width="1.5"/></svg>
<div class="t" style="left:779.00px;width:300px;top:488.55px;font-size:11.4px;font-weight:normal;color:#111;text-align:center;-webkit-text-stroke:0.25px #111;letter-spacing:-0.233px;">Netherland</div>
<svg class="abs" style="left:758.90px;top:474.80px;" width="35" height="21.5" viewBox="0 0 35 21.5"><path d="M0.5 1.5 Q0.5 0.5 1.5 0.5 H21.5 Q22.8 0.5 23.7 1.5 L29 7.4 Q34.5 8.4 34.5 11.2 V16.5 Q34.5 17.3 33.5 17.3 H1.5 Q0.5 17.3 0.5 16.5 Z" fill="#0b3f30"/>
<path d="M22 3.2 H23.6 L27.6 8 H22 Z" fill="#e9eee9"/>
<text x="10.5" y="12.8" font-family="Liberation Sans" font-weight="bold" font-size="12" fill="#d8bd4f" text-anchor="middle">€</text>
<circle cx="7" cy="17.8" r="2.6" fill="#f2f2f0" stroke="#0a2a20" stroke-width="1.5"/>
<circle cx="27.4" cy="17.8" r="2.6" fill="#f2f2f0" stroke="#0a2a20" stroke-width="1.5"/></svg>
<div class="t" style="left:625.70px;width:300px;top:499.15px;font-size:11.4px;font-weight:normal;color:#111;text-align:center;-webkit-text-stroke:0.25px #111;letter-spacing:-0.188px;">Rotterdam</div>
<div class="t" style="left:702.40px;width:300px;top:470.75px;font-size:11.4px;font-weight:normal;color:#111;text-align:center;-webkit-text-stroke:0.25px #111;letter-spacing:-0.046px;">Utrecht</div>
<svg class="abs" style="left:767.70px;top:433.70px;" width="14.4" height="20" viewBox="0 0 14.4 20"><path d="M7.2 19.5 Q0.3 11.5 0.3 7.2 A6.9 6.9 0 0 1 14.1 7.2 Q14.1 11.5 7.2 19.5Z" fill="#0b3f30"/><circle cx="7.2" cy="7.2" r="2.7" fill="#dfe8a6"/></svg>
<svg class="abs" style="left:743.80px;top:451.80px;" width="14.4" height="20" viewBox="0 0 14.4 20"><path d="M7.2 19.5 Q0.3 11.5 0.3 7.2 A6.9 6.9 0 0 1 14.1 7.2 Q14.1 11.5 7.2 19.5Z" fill="#0b3f30"/><circle cx="7.2" cy="7.2" r="2.7" fill="#dfe8a6"/></svg>
<svg class="abs" style="left:844.00px;top:447.60px;" width="14.4" height="20" viewBox="0 0 14.4 20"><path d="M7.2 19.5 Q0.3 11.5 0.3 7.2 A6.9 6.9 0 0 1 14.1 7.2 Q14.1 11.5 7.2 19.5Z" fill="#0b3f30"/><circle cx="7.2" cy="7.2" r="2.7" fill="#dfe8a6"/></svg>
<div class="abs" style="left:0;top:553px;width:6px;height:6px;background:radial-gradient(circle at 6px 0,transparent 5.5px,#111 6px)"></div>
<div class="abs" style="left:1018px;top:553px;width:6px;height:6px;background:radial-gradient(circle at 0 0,transparent 5.5px,#111 6px)"></div>
</body></html>
